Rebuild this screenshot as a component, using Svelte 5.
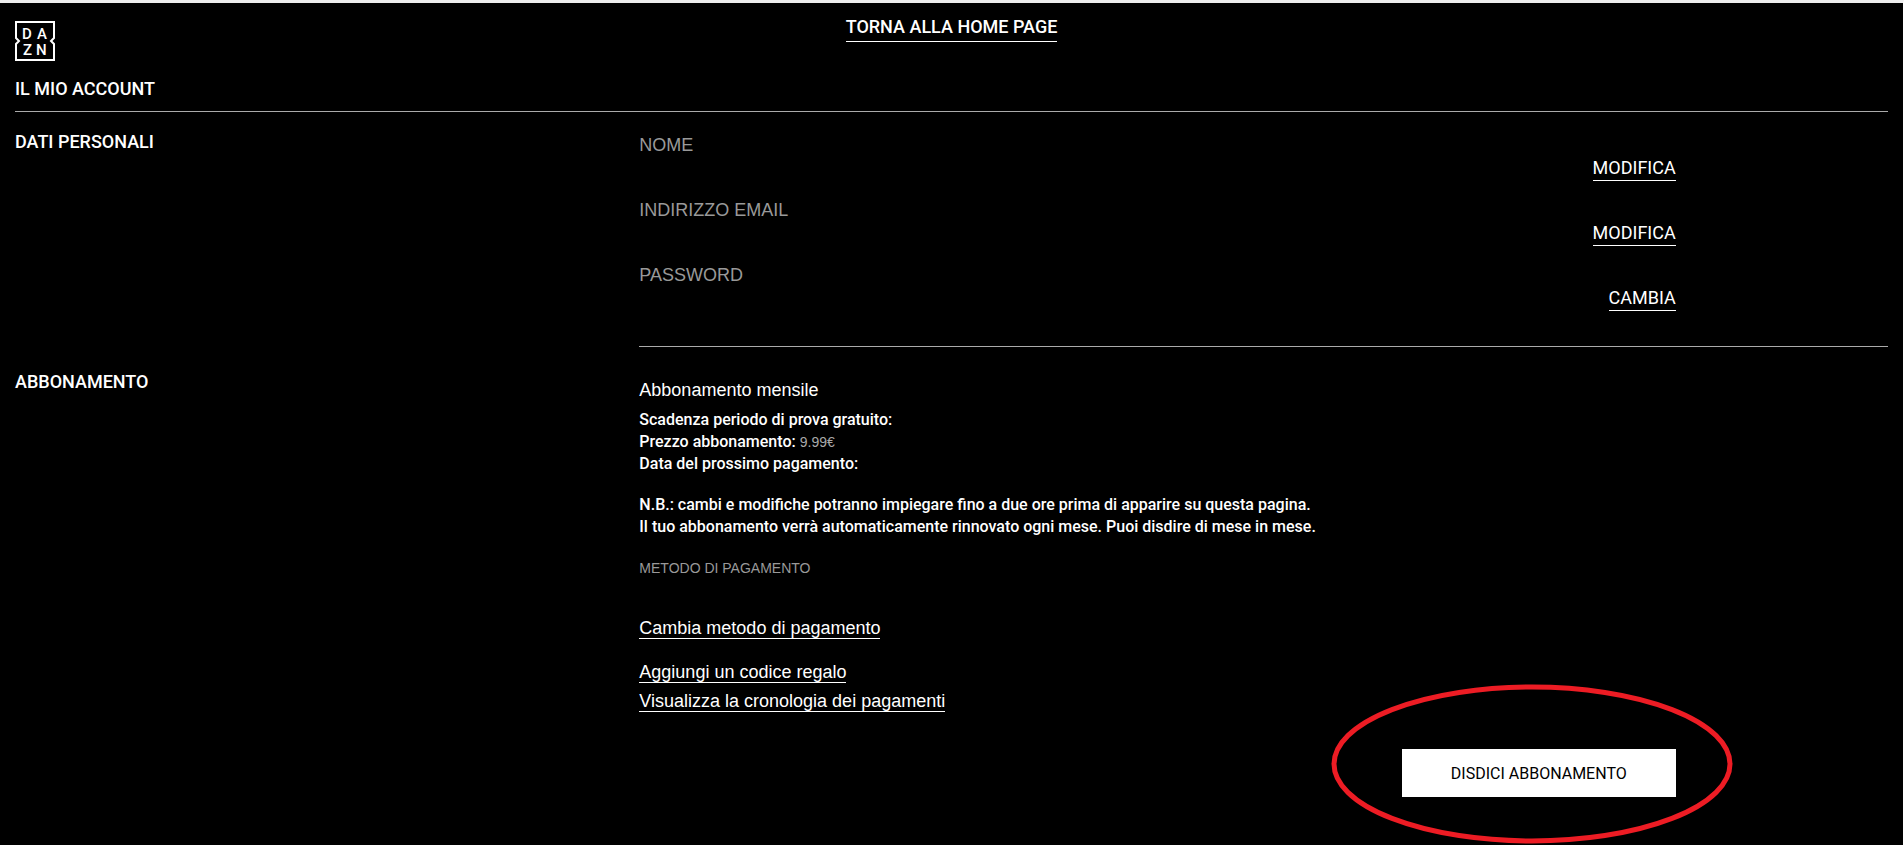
<script lang="ts">
    type Field = { label: string; action: string };

    const fields: Field[] = [
        { label: 'Nome', action: 'Modifica' },
        { label: 'Indirizzo email', action: 'Modifica' },
        { label: 'Password', action: 'Cambia' },
    ];

    const price = '9.99€';
</script>

<div class="page">
    <header>
        <a class="logo" href="#home" aria-label="DAZN">
            <svg width="40" height="40" viewBox="0 0 40 40">
                <path
                        d="M1 1H39V17L36 20L39 23V39H1V23L4 20L1 17Z"
                        fill="none"
                        stroke="#fff"
                        stroke-width="2"
                />
                <text x="7" y="18">D</text>
                <text x="22" y="18">A</text>
                <text x="8" y="34">Z</text>
                <text x="21" y="34">N</text>
            </svg>
        </a>
        <a class="link home" href="#home">Torna alla home page</a>
    </header>

    <h1>Il mio account</h1>

    <main>
        <section>
            <h2>Dati personali</h2>
            <div class="content personal">
                {#each fields as field}
                    <div class="field">
                        <span class="label">{field.label}</span>
                        <a class="link action" href="#edit">{field.action}</a>
                    </div>
                {/each}
            </div>
        </section>

        <section class="subscription">
            <h2>Abbonamento</h2>
            <div class="content">
                <h3>Abbonamento mensile</h3>
                <div class="details">
                    <p>Scadenza periodo di prova gratuito:</p>
                    <p>Prezzo abbonamento: <span class="price">{price}</span></p>
                    <p>Data del prossimo pagamento:</p>
                </div>
                <div class="details note">
                    <p>N.B.: cambi e modifiche potranno impiegare fino a due ore prima di apparire su questa pagina.</p>
                    <p>Il tuo abbonamento verrà automaticamente rinnovato ogni mese. Puoi disdire di mese in mese.</p>
                </div>
                <h4>Metodo di pagamento</h4>
                <div class="payment-links">
                    <a class="link" href="#payment">Cambia metodo di pagamento</a>
                    <a class="link gift" href="#gift">Aggiungi un codice regalo</a>
                    <a class="link" href="#history">Visualizza la cronologia dei pagamenti</a>
                </div>
                <div class="cancel-row">
                    <div class="cancel">
                        <button type="button">Disdici abbonamento</button>
                        <svg class="marker" viewBox="0 0 402 160" aria-hidden="true">
                            <ellipse cx="201" cy="80" rx="198" ry="77" />
                        </svg>
                    </div>
                </div>
            </div>
        </section>
    </main>
</div>

<style>
    :global(body) {
        background: #000;
    }

    .page {
        box-sizing: border-box;
        min-height: 100vh;
        padding: 0 15px;
        border-top: 3px solid #eee;
        border-right: 1px solid #fff;
        background: #000;
        color: #fff;
        font-family: Roboto, sans-serif;
        font-size: 16px;
    }

    h1, h2, h3, h4, p {
        margin: 0;
    }

    header {
        display: grid;
        grid-template-columns: 1fr auto 1fr;
        align-items: start;
    }

    .logo {
        justify-self: start;
        margin-top: 18px;
        line-height: 0;
    }

    .logo text {
        fill: #fff;
        font: 500 15px Roboto, sans-serif;
    }

    .link {
        border-bottom: 1px solid #fff;
        color: #fff;
        text-decoration: none;
    }

    .home {
        margin-top: 14px;
        padding-bottom: 4px;
        font-size: 18px;
        font-weight: 500;
        line-height: 20px;
        text-transform: uppercase;
    }

    h1, h2 {
        font-size: 18px;
        font-weight: 500;
        line-height: 20px;
        text-transform: uppercase;
    }

    h1 {
        padding: 18px 0 12px;
        border-bottom: 1px solid #aaa;
    }

    section {
        display: grid;
        grid-template-columns: 1fr 2fr;
    }

    section h2 {
        padding-top: 20px;
    }

    .subscription h2 {
        padding-top: 25px;
    }

    .personal {
        padding: 23px 0 41px;
        border-bottom: 1px solid #aaa;
    }

    .field {
        display: flex;
        justify-content: space-between;
        width: 83%;
        height: 65px;
    }

    .field:last-child {
        height: 40px;
    }

    .label {
        color: #999;
        font-family: "Liberation Sans", Arial, sans-serif;
        font-size: 18px;
        line-height: 20px;
        text-transform: uppercase;
    }

    .action {
        align-self: flex-start;
        margin-top: 23px;
        padding-bottom: 2px;
        font-size: 18px;
        line-height: 20px;
        text-transform: uppercase;
    }

    h3 {
        padding: 32px 0 8px;
        font: 18px/22px "Liberation Sans", Arial, sans-serif;
    }

    .details {
        font-weight: 500;
        line-height: 22px;
    }

    .note {
        margin: 19px 0 20px;
    }

    .price {
        color: #aaa;
        font: 14px "Liberation Sans", Arial, sans-serif;
    }

    h4 {
        color: #999;
        font: 14px/20px "Liberation Sans", Arial, sans-serif;
        text-transform: uppercase;
    }

    .payment-links {
        display: flex;
        flex-direction: column;
        align-items: flex-start;
        gap: 8px;
        margin-top: 40px;
        font: 18px/20px "Liberation Sans", Arial, sans-serif;
    }

    .gift {
        margin-top: 15px;
    }

    .cancel-row {
        display: flex;
        justify-content: flex-end;
        width: 83%;
        margin-top: 37px;
    }

    .cancel {
        position: relative;
    }

    button {
        display: block;
        height: 48px;
        padding: 0 49px;
        border: none;
        background: #fff;
        color: #000;
        font: 16px Roboto, sans-serif;
        text-transform: uppercase;
        cursor: pointer;
    }

    /* highlight drawn around the cancel button */
    .marker {
        position: absolute;
        top: -65px;
        left: -71px;
        width: 402px;
        height: 160px;
        pointer-events: none;
    }

    .marker ellipse {
        fill: none;
        stroke: #ed1c24;
        stroke-width: 5;
    }
</style>
